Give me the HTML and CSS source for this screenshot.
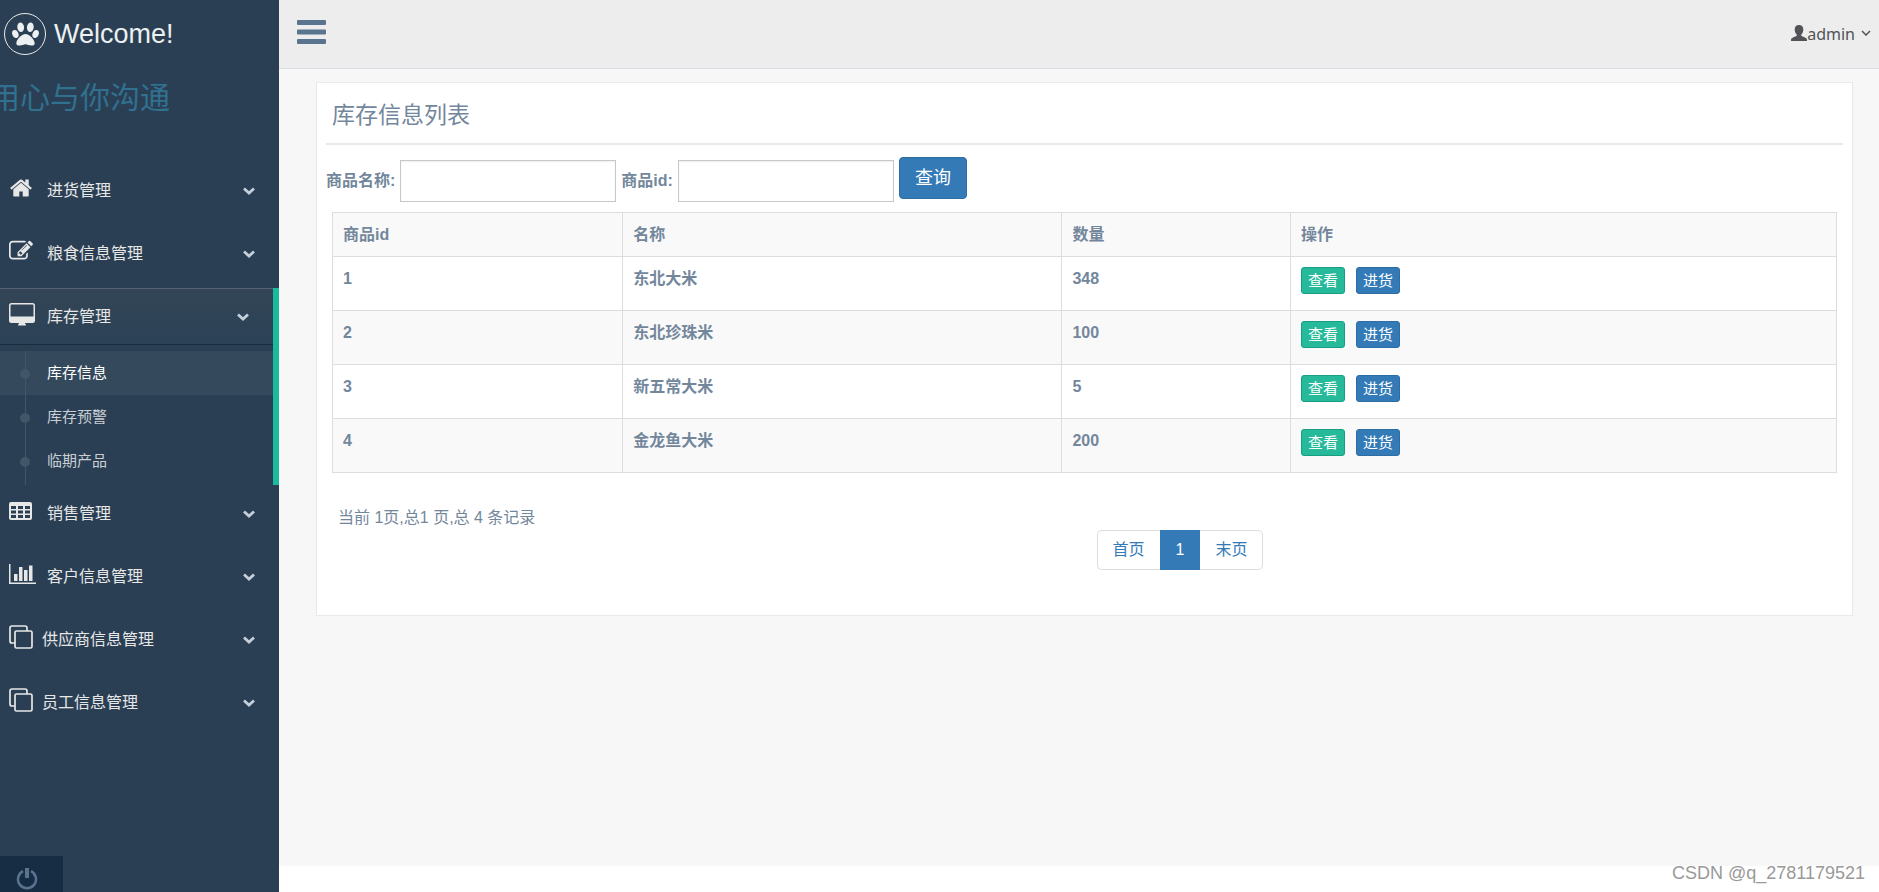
FILE: index.html
```html
<!DOCTYPE html>
<html lang="zh-CN">
<head>
<meta charset="utf-8">
<title>库存信息列表</title>
<link rel="stylesheet" href="styles.css">
</head>
<body>
<svg class="defs" aria-hidden="true">
  <symbol id="home" viewBox="0 0 1792 1792"><path d="M1472 992v480q0 26-19 45t-45 19h-384v-384h-256v384h-384q-26 0-45-19t-19-45v-480q0-1 .5-3t.5-3l575-474 575 474q1 2 1 6zm223-69l-62 74q-8 9-21 11h-3q-13 0-21-7l-692-577-692 577q-12 8-24 7-13-2-21-11l-62-74q-8-10-7-23.500t11-21.500l719-599q32-26 76-26t76 26l244 204v-195q0-14 9-23t23-9h192q14 0 23 9t9 23v408l219 182q10 8 11 21.500t-7 23.500z"/></symbol>
  <symbol id="edit" viewBox="0 0 1792 1792"><path d="M888 1184l116-116-152-152-116 116v56h96v96h56zm440-720q-16-16-33 1l-350 350q-17 17-1 33t33-1l350-350q17-17 1-33zm80 594v190q0 119-84.500 203.500t-203.500 84.500h-832q-119 0-203.500-84.500t-84.500-203.500v-832q0-119 84.500-203.500t203.500-84.500h832q63 0 117 25 15 7 18 23 3 17-9 29l-49 49q-14 14-32 8-23-6-45-6h-832q-66 0-113 47t-47 113v832q0 66 47 113t113 47h832q66 0 113-47t47-113v-126q0-13 9-22l64-64q15-15 35-7t20 29zm-96-738l288 288-672 672h-288v-288zm444 132l-92 92-288-288 92-92q28-28 68-28t68 28l152 152q28 28 28 68t-28 68z"/></symbol>
  <symbol id="desktop" viewBox="0 0 26 24"><path fill-rule="evenodd" d="M2.500 1h21Q26 1 26 3.500v15q0 2.500-2.500 2.500H16q0 1 1 1.500v1H9v-1q1-.5 1-1.500H2.500Q0 21 0 18.500v-15Q0 1 2.500 1zM2.500 2.500q-1 0-1 1V14.500h23V3.500q0-1-1-1z"/></symbol>
  <symbol id="table" viewBox="0 0 24 24"><path fill-rule="evenodd" d="M2 3h19q2 0 2 2v14q0 2-2 2H2q-2 0-2-2V5q0-2 2-2zM2 7v3h5V7zM9 7v3h5V7zM16 7v3h5V7zM2 11.500v3h5v-3zM9 11.500v3h5v-3zM16 11.500v3h5v-3zM2 16v3h5v-3zM9 16v3h5v-3zM16 16v3h5v-3z"/></symbol>
  <symbol id="chart" viewBox="0 0 28 24"><path d="M0 2h1.500v18.500H27V22H0zM5 12h3.500v7H5zM10 5h3.500v14H10zM15 8h3.500v11H15zM20 3.500h3.500V19H20z"/></symbol>
  <symbol id="clone" viewBox="0 0 24 24"><g fill="none" stroke="currentColor" stroke-width="1.700"><rect x="6" y="6" width="17" height="17" rx="1.500"/><path d="M6 18H3Q1 18 1 16V3Q1 1 3 1h13q2 0 2 2v3"/></g></symbol>
  <symbol id="chevron" viewBox="0 0 12 8"><path d="M1 1.500L6 6l5-4.500" fill="none" stroke="currentColor" stroke-width="2.800"/></symbol>
  <symbol id="angle" viewBox="0 0 10 6"><path d="M1 1l4 4 4-4" fill="none" stroke="currentColor" stroke-width="1.500"/></symbol>
  <symbol id="paw" viewBox="0 0 28 24"><ellipse cx="9" cy="5" rx="3.500" ry="5" transform="rotate(-8 9 5)"/><ellipse cx="19" cy="5" rx="3.500" ry="5" transform="rotate(8 19 5)"/><ellipse cx="3.500" cy="12" rx="3.200" ry="4.300" transform="rotate(-20 3.500 12)"/><ellipse cx="24.500" cy="12" rx="3.200" ry="4.300" transform="rotate(20 24.500 12)"/><path d="M14 12c4 0 9.500 6 9.500 9.500 0 2-1.500 2.500-3.500 2.500-2.500 0-4-1.300-6-1.300S10.500 24 8 24C6 24 4.500 23.500 4.500 21.500 4.500 18 10 12 14 12z"/></symbol>
  <symbol id="user" viewBox="0 0 16 16"><path d="M8 0c3 0 4.300 2 4.300 4.500 0 2-.8 4-2 5v1.300c1.500 1 4 1.700 5 2.500.6.500.7 1.200.7 2.700H0c0-1.500.1-2.200.7-2.700 1-.8 3.500-1.500 5-2.500V9.500c-1.200-1-2-3-2-5C3.700 2 5 0 8 0z"/></symbol>
  <symbol id="power" viewBox="0 0 22 22"><path d="M7 3.200a9 9 0 1 0 8 0" fill="none" stroke="currentColor" stroke-width="2.500"/><path d="M9 0h4v10H9z"/></symbol>
  <symbol id="bars" viewBox="0 0 29 24"><rect width="29" height="5" rx="1"/><rect y="9.500" width="29" height="5" rx="1"/><rect y="19" width="29" height="5" rx="1"/></symbol>
</svg>

<aside class="sidebar">
  <a class="brand" href="#"><span class="brand-mark"><svg class="paw"><use href="#paw"/></svg></span><span>Welcome!</span></a>
  <p class="slogan">用心与你沟通</p>
  <nav>
    <ul class="menu">
      <li><a class="item" href="#"><svg class="icon"><use href="#home"/></svg><span>进货管理</span><svg class="chevron"><use href="#chevron"/></svg></a></li>
      <li><a class="item" href="#"><svg class="icon"><use href="#edit"/></svg><span>粮食信息管理</span><svg class="chevron"><use href="#chevron"/></svg></a></li>
      <li class="active">
        <a class="item" href="#"><svg class="icon icon-desktop"><use href="#desktop"/></svg><span>库存管理</span><svg class="chevron"><use href="#chevron"/></svg></a>
        <ul class="submenu">
          <li><a class="subitem current" href="#">库存信息</a></li>
          <li><a class="subitem" href="#">库存预警</a></li>
          <li><a class="subitem" href="#">临期产品</a></li>
        </ul>
      </li>
      <li><a class="item" href="#"><svg class="icon"><use href="#table"/></svg><span>销售管理</span><svg class="chevron"><use href="#chevron"/></svg></a></li>
      <li><a class="item" href="#"><svg class="icon icon-chart"><use href="#chart"/></svg><span>客户信息管理</span><svg class="chevron"><use href="#chevron"/></svg></a></li>
      <li><a class="item tight" href="#"><svg class="icon"><use href="#clone"/></svg><span>供应商信息管理</span><svg class="chevron"><use href="#chevron"/></svg></a></li>
      <li><a class="item tight" href="#"><svg class="icon"><use href="#clone"/></svg><span>员工信息管理</span><svg class="chevron"><use href="#chevron"/></svg></a></li>
    </ul>
  </nav>
  <button class="power" type="button" aria-label="退出"><svg><use href="#power"/></svg></button>
</aside>

<div class="page">
  <header class="topbar">
    <button class="toggle" type="button" aria-label="菜单"><svg><use href="#bars"/></svg></button>
    <a class="account" href="#"><svg class="user"><use href="#user"/></svg><span>admin</span><svg class="angle"><use href="#angle"/></svg></a>
  </header>
  <main class="content">
    <section class="panel">
      <h2 class="title">库存信息列表</h2>
      <form class="search">
        <label for="name">商品名称:</label>
        <input id="name" type="text">
        <label for="gid">商品id:</label>
        <input id="gid" type="text">
        <button class="btn primary" type="button">查询</button>
      </form>
      <table class="stock">
        <colgroup><col class="c-id"><col class="c-name"><col class="c-count"><col></colgroup>
        <thead><tr><th>商品id</th><th>名称</th><th>数量</th><th>操作</th></tr></thead>
        <tbody>
          <tr><th>1</th><th>东北大米</th><th>348</th><td><div class="actions"><button class="btn small success" type="button">查看</button><button class="btn small primary" type="button">进货</button></div></td></tr>
          <tr><th>2</th><th>东北珍珠米</th><th>100</th><td><div class="actions"><button class="btn small success" type="button">查看</button><button class="btn small primary" type="button">进货</button></div></td></tr>
          <tr><th>3</th><th>新五常大米</th><th>5</th><td><div class="actions"><button class="btn small success" type="button">查看</button><button class="btn small primary" type="button">进货</button></div></td></tr>
          <tr><th>4</th><th>金龙鱼大米</th><th>200</th><td><div class="actions"><button class="btn small success" type="button">查看</button><button class="btn small primary" type="button">进货</button></div></td></tr>
        </tbody>
      </table>
      <div class="paging">
        <p class="summary">当前 1页,总1 页,总 4 条记录</p>
        <nav class="pages"><a href="#">首页</a><a class="on" href="#">1</a><a href="#">末页</a></nav>
      </div>
    </section>
  </main>
  <footer class="footer"></footer>
</div>
<div class="watermark">CSDN @q_2781179521</div>
</body>
</html>
```
FILE: styles.css
```css
* { box-sizing: border-box; }

body {
  margin: 0;
  display: flex;
  min-height: 100vh;
  background: #fff;
  color: #73879c;
  font: 16px/24px "Liberation Sans", "Noto Sans CJK SC", sans-serif;
}

a { color: inherit; text-decoration: none; }
ul { margin: 0; padding: 0; list-style: none; }
p, h2 { margin: 0; }
button, input { font: inherit; color: inherit; }
svg { display: block; fill: currentColor; flex: none; }
.defs { position: absolute; width: 0; height: 0; }

/* Sidebar */
.sidebar {
  display: flex;
  flex-direction: column;
  flex: none;
  width: 279px;
  overflow: hidden;
  background: #2a3f54;
  color: #e7e7e7;
}

.brand {
  display: flex;
  align-items: center;
  gap: 8px;
  height: 67px;
  padding-left: 4px;
  color: #ecf0f1;
  font-size: 27px;
}

.brand-mark {
  display: grid;
  place-items: center;
  width: 42px;
  height: 42px;
  border: 1px solid #eaeaea;
  border-radius: 50%;
}

.paw { width: 27px; height: 24px; }

.slogan {
  height: 95px;
  margin-left: -10px;
  color: #31708f;
  font-size: 30px;
  line-height: 62px;
}

.item {
  display: flex;
  align-items: center;
  gap: 14px;
  height: 57px;
  margin-bottom: 6px;
  padding: 0 24px 0 9px;
}

.item.tight { gap: 9px; }
.icon { width: 24px; height: 24px; margin-bottom: 6px; }
.icon-desktop { width: 26px; margin-right: -2px; }
.icon-chart { width: 28px; margin-right: -4px; }
.chevron { width: 12px; height: 8px; margin-left: auto; color: #c4cfda; }

.active { border-right: 6px solid #1abb9c; }

.active .item {
  border-top: 1px solid #566270;
  border-bottom: 1px solid #1d2c3c;
  background: linear-gradient(#334556, #2c4257);
}

.submenu { position: relative; padding-bottom: 2px; }

.submenu::before {
  content: "";
  position: absolute;
  top: 0;
  bottom: 0;
  left: 25px;
  width: 1px;
  background: #425668;
}

.subitem {
  display: flex;
  align-items: center;
  gap: 17px;
  height: 44px;
  padding: 0 0 1px 20px;
  color: #c9cfd5;
  font-size: 15px;
}

.subitem::before {
  content: "";
  width: 10px;
  height: 10px;
  margin-top: 3px;
  border-radius: 50%;
  background: #425668;
}

.current { background: #35495d; color: #fff; }

.power {
  display: flex;
  justify-content: center;
  width: 63px;
  height: 36px;
  margin-top: auto;
  padding: 12px 9px 0 0;
  border: 0;
  background: #172d44;
  color: #5a738e;
}

.power svg { width: 22px; height: 22px; }

/* Main column */
.page {
  display: flex;
  flex: 1;
  flex-direction: column;
  min-width: 0;
}

.topbar {
  display: flex;
  align-items: center;
  justify-content: space-between;
  height: 69px;
  padding: 0 8px 4px 18px;
  border-bottom: 1px solid #d9dee4;
  background: #ededed;
}

.toggle { padding: 0; border: 0; background: none; color: #5a738e; }
.toggle svg { width: 29px; height: 24px; }

.account {
  display: flex;
  align-items: center;
  margin-top: 4px;
  color: #515356;
  font-family: "Noto Sans", sans-serif;
}

.user { width: 16px; height: 16px; margin-bottom: 3px; }
.angle { width: 10px; height: 6px; margin: 0 0 3px 6px; }

.content { flex: 1; padding: 13px 26px 26px 37px; background: #f7f7f7; }
.footer { height: 26px; }

.panel {
  min-height: 534px;
  padding: 10px 9px;
  border: 1px solid #e6e9ed;
  background: #fff;
}

.title {
  height: 52px;
  padding-left: 6px;
  border-bottom: 2px solid #e6e9ed;
  font-size: 23px;
  font-weight: 400;
  line-height: 45px;
}

.search {
  display: flex;
  align-items: center;
  gap: 5px;
  margin: 12px 0 7px;
}

.search label { font-weight: 700; }

.search input {
  width: 216px;
  height: 42px;
  padding: 6px 12px;
  border: 1px solid #c8c8c8;
  border-radius: 0;
  background: #fff;
  box-shadow: inset 0 1px 2px #eee;
}

.btn {
  height: 42px;
  padding: 0 15px;
  border: 1px solid;
  border-radius: 4px;
  color: #fff;
  font-size: 18px;
}

.search .btn { margin-bottom: 6px; }
.primary { border-color: #2e6da4; background: #337ab7; }
.success { border-color: #169f85; background: #26b99a; }
.small { height: 27px; padding: 0 6px; border-radius: 3px; font-size: 15px; line-height: 22px; }
.actions { display: flex; gap: 11px; margin-bottom: 6px; }

.stock {
  width: calc(100% - 12px);
  margin: 0 6px;
  border-collapse: collapse;
  table-layout: fixed;
}

.c-id { width: 19.3%; }
.c-name { width: 29.2%; }
.c-count { width: 15.2%; }

.stock th, .stock td {
  padding: 10px;
  border: 1px solid #ddd;
  line-height: 23px;
  text-align: left;
  vertical-align: top;
}

.stock thead tr, .stock tbody tr:nth-child(even) { background: #f9f9f9; }

.paging {
  display: grid;
  grid-template-columns: 1fr 1fr;
  padding: 33px 12px 0;
}

.pages {
  display: flex;
  justify-self: start;
  margin: 24px 0 0 12px;
  color: #337ab7;
  line-height: 38px;
}

.pages a { padding: 0 15px; border: 1px solid #ddd; }
.pages a:first-child { border-right: 0; border-radius: 5px 0 0 5px; }
.pages a:last-child { border-left: 0; border-radius: 0 5px 5px 0; }
.pages .on { border-color: #337ab7; background: #337ab7; color: #fff; }

.watermark {
  position: absolute;
  right: 14px;
  bottom: 7px;
  color: #999;
  font-size: 18px;
  text-shadow: -1px -1px #fff;
}
```
